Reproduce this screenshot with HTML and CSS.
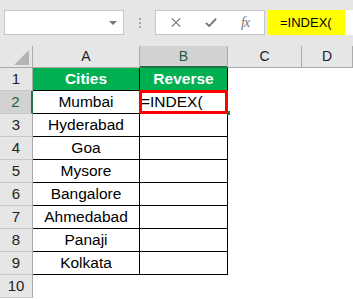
FILE: index.html
```html
<!DOCTYPE html>
<html lang="en">
  <head>
    <meta charset="UTF-8" />
    <meta name="viewport" content="width=device-width, initial-scale=1.0" />
    <title>INDEX formula</title>
    <link rel="stylesheet" href="styles.css">
  </head>
  <body>
    <div class="formula-bar">
      <div class="name-box">
        <svg class="drop-icon" viewBox="0 0 8 4"><path d="M0 0h8L4 4z" /></svg>
      </div>
      <div class="grip">
        <span></span><span></span><span></span>
      </div>
      <div class="fx-buttons">
        <svg class="btn-icon" viewBox="0 0 12 12">
          <path d="M1.5 1.5l9 9M10.5 1.5l-9 9" stroke="#767676" stroke-width="1.3" fill="none" />
        </svg>
        <svg class="btn-icon" viewBox="0 0 14 12">
          <path d="M1 6.5l4 3.5 8-8.5" stroke="#767676" stroke-width="2.2" fill="none" />
        </svg>
        <span class="fx">fx</span>
      </div>
      <div class="formula-input">
        <span class="formula-text">=INDEX(</span>
      </div>
    </div>

    <div class="sheet">
      <div class="corner">
        <svg class="corner-icon" viewBox="0 0 15 15"><path d="M15 0V15H0z" /></svg>
      </div>
      <div class="col-head">A</div>
      <div class="col-head active">B</div>
      <div class="col-head">C</div>
      <div class="col-head">D</div>

      <div class="row-head">1</div>
      <div class="cell title">Cities</div>
      <div class="cell title">Reverse</div>
      <div class="cell"></div>
      <div class="cell"></div>

      <div class="row-head active">2</div>
      <div class="cell data">Mumbai</div>
      <div class="cell data editing">=INDEX(</div>
      <div class="cell"></div>
      <div class="cell"></div>

      <div class="row-head">3</div>
      <div class="cell data">Hyderabad</div>
      <div class="cell data"></div>
      <div class="cell"></div>
      <div class="cell"></div>

      <div class="row-head">4</div>
      <div class="cell data">Goa</div>
      <div class="cell data"></div>
      <div class="cell"></div>
      <div class="cell"></div>

      <div class="row-head">5</div>
      <div class="cell data">Mysore</div>
      <div class="cell data"></div>
      <div class="cell"></div>
      <div class="cell"></div>

      <div class="row-head">6</div>
      <div class="cell data">Bangalore</div>
      <div class="cell data"></div>
      <div class="cell"></div>
      <div class="cell"></div>

      <div class="row-head">7</div>
      <div class="cell data">Ahmedabad</div>
      <div class="cell data"></div>
      <div class="cell"></div>
      <div class="cell"></div>

      <div class="row-head">8</div>
      <div class="cell data">Panaji</div>
      <div class="cell data"></div>
      <div class="cell"></div>
      <div class="cell"></div>

      <div class="row-head">9</div>
      <div class="cell data">Kolkata</div>
      <div class="cell data"></div>
      <div class="cell"></div>
      <div class="cell"></div>

      <div class="row-head">10</div>
      <div class="cell"></div>
      <div class="cell"></div>
      <div class="cell"></div>
      <div class="cell"></div>
    </div>
  </body>
</html>
```

FILE: styles.css
```css
* {
  margin: 0;
  box-sizing: border-box;
}
html {
  background-color: #ffffff;
}
body {
  font-family: "Liberation Sans", Arial, sans-serif;
  overflow: hidden;
}

.formula-bar {
  background-color: #e6e6e6;
  height: 46px;
  display: flex;
  align-items: flex-start;
  padding: 10px 0 0 4px;
}

.name-box {
  width: 120px;
  height: 25px;
  background: #ffffff;
  border: 1px solid #c6c6c6;
  display: flex;
  align-items: center;
  justify-content: flex-end;
  padding-right: 6px;
}
.drop-icon {
  width: 8px;
  height: 4px;
  fill: #777777;
}

.grip {
  width: 31px;
  height: 25px;
  display: flex;
  flex-direction: column;
  align-items: center;
  justify-content: center;
  gap: 2px;
}
.grip span {
  width: 2px;
  height: 2px;
  background: #a6a6a6;
}

.fx-buttons {
  width: 110px;
  height: 25px;
  background: #ffffff;
  border: 1px solid #c6c6c6;
  display: flex;
  align-items: center;
  padding-left: 14px;
  gap: 23px;
}
.btn-icon {
  width: 12px;
  height: 11px;
}
.fx {
  font-family: "Liberation Serif", "Times New Roman", serif;
  font-style: italic;
  font-size: 14px;
  color: #767676;
  letter-spacing: -1px;
  margin-left: 1px;
}

.formula-input {
  flex: 1;
  height: 25px;
  margin-left: 3px;
  background: #ffffff;
  display: flex;
}
.formula-text {
  width: 77px;
  background: #ffff00;
  font-family: "Liberation Sans", Arial, sans-serif;
  font-size: 13px;
  line-height: 25px;
  padding-left: 12px;
  color: #000000;
}

.sheet {
  display: grid;
  grid-template-columns: 33px 107px 88px 74px 51px;
  grid-template-rows: 22px repeat(10, 23px);
}

.corner {
  background: #e6e6e6;
  border-right: 1px solid #ababab;
  border-bottom: 1px solid #ababab;
  display: flex;
  align-items: flex-end;
  justify-content: flex-end;
  padding: 0 3px 2px 0;
}
.corner-icon {
  width: 15px;
  height: 15px;
  fill: #b4b4b4;
}

.col-head {
  background: #e6e6e6;
  border-right: 1px solid #ababab;
  border-bottom: 1px solid #ababab;
  font-size: 14px;
  line-height: 21px;
  text-align: center;
  color: #222222;
}
.col-head.active {
  background: #d2d2d2;
  border-bottom: 2px solid #217346;
  color: #1e5e3c;
}

.row-head {
  background: #e6e6e6;
  border-right: 1px solid #ababab;
  border-bottom: 1px solid #c8c8c8;
  font-size: 15px;
  line-height: 22px;
  text-align: center;
  color: #222222;
}
.row-head.active {
  background: #d2d2d2;
  border-right: 2px solid #217346;
  color: #1e5e3c;
}

.cell {
  background: #ffffff;
  font-size: 15.5px;
  line-height: 22px;
  text-align: center;
  color: #000000;
  white-space: nowrap;
}
.cell.title {
  background: #00b050;
  color: #ffffff;
  font-weight: bold;
  border-right: 1px solid #000000;
  border-bottom: 1px solid #000000;
}
.cell.data {
  border-right: 1px solid #000000;
  border-bottom: 1px solid #000000;
}
.cell.editing {
  position: relative;
  text-align: left;
  padding-left: 1px;
}
.cell.editing::after {
  content: "";
  position: absolute;
  left: -1px;
  top: -1px;
  right: -1px;
  bottom: -1px;
  border: 3px solid #ff0000;
}
.cell.editing::before {
  content: "";
  position: absolute;
  right: -3px;
  bottom: -2px;
  width: 3px;
  height: 4px;
  background: #217346;
}
```
